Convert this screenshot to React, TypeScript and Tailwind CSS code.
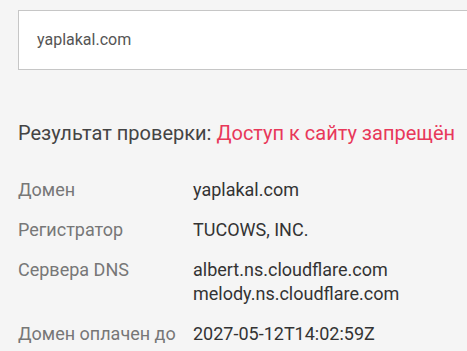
import React from "react";

const rows: { label: string; values: string[] }[] = [
  { label: "Домен", values: ["yaplakal.com"] },
  { label: "Регистратор", values: ["TUCOWS, INC."] },
  { label: "Сервера DNS", values: ["albert.ns.cloudflare.com", "melody.ns.cloudflare.com"] },
  { label: "Домен оплачен до", values: ["2027-05-12T14:02:59Z"] },
];

const App = () => {
  return (
    <div className="min-h-screen w-full overflow-hidden bg-[#f5f5f5] pl-[18px] pt-[10px] font-['Roboto',sans-serif]">
      <div className="flex h-[60px] w-[480px] items-center border border-[#c6c6c6] bg-white pl-[18px] text-[16px] text-[#555]">
        yaplakal.com
      </div>

      <div className="mt-[49px] text-[20px] leading-[28px] text-[#444]">
        Результат проверки: <span className="text-[#e8385a]">Доступ к сайту запрещён</span>
      </div>

      <div className="mt-[31px] flex flex-col gap-[16px] text-[18px] leading-[24px]">
        {rows.map((row) => (
          <div key={row.label} className="flex">
            <div className="w-[175px] shrink-0 text-[#777]">{row.label}</div>
            <div className="text-[#333]">
              {row.values.map((v) => (
                <div key={v}>{v}</div>
              ))}
            </div>
          </div>
        ))}
      </div>
    </div>
  );
};

export default App;
